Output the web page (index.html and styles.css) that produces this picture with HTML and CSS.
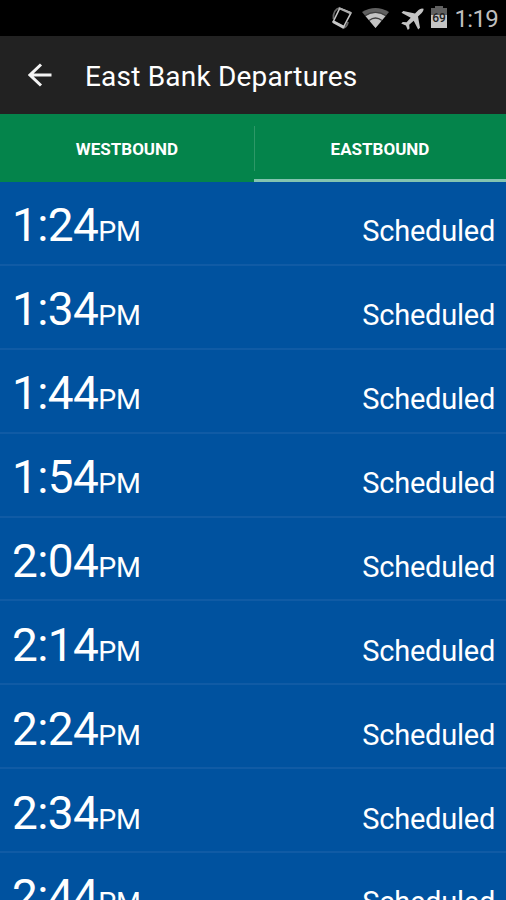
FILE: index.html
```html
<!DOCTYPE html>
<html lang="en">
<head>
<meta charset="utf-8">
<title>East Bank Departures</title>
<link rel="stylesheet" href="styles.css">
</head>
<body>
<div class="status">
  <svg class="ic-rotate" viewBox="0 0 22 24" width="22" height="24">
    <path d="M2.500 13Q1.500 4 9 1.500M17 16Q16 21 11.500 22.500" fill="none" stroke="#666" stroke-width="1.800"/>
    <path d="M8.800 2.200 20 6.800 12.500 21 2.300 15.500Z" fill="#000" stroke="#c4c4c4" stroke-width="1.600" stroke-linejoin="round"/>
    <path d="M2.800 16 12 20.800" stroke="#c8c8c8" stroke-width="3" stroke-linecap="round"/>
    <path d="M9.500 2.900 19 7" stroke="#aaa" stroke-width="2" stroke-linecap="round"/>
  </svg>
  <svg class="ic-wifi" viewBox="0 0 27 20" width="27" height="20">
    <path d="M0 4Q13.500-4 27 4L13.500 20Z" fill="#606060"/>
    <path d="M3.500 8Q13.500 1.500 23.500 8L13.500 20Z" fill="#c4c4c4"/>
    <path d="M3 7.700Q13.500 1 24 7.700M7 12.500Q13.500 7.500 20 12.500" fill="none" stroke="#404040" stroke-width="1.300"/>
  </svg>
  <svg class="ic-plane" viewBox="0 0 23 22" width="23" height="22">
    <path d="M22.500.7Q20-.3 17.500 2L14 5.400 2.300 3 .5 4.700 9.700 9.700 5.600 14.300 1.800 13.900.2 15.400 4.900 17.500 6.800 21.900 8.500 20.400 8.200 16.700 12.700 12.800 17.200 21.500 19 19.800 17 8.600 20.700 5Q23 2.500 22.500.7Z" fill="#c4c4c4"/>
  </svg>
  <div class="battery"><span>69</span></div>
  <span class="clock">1:19</span>
</div>
<header class="bar">
  <svg class="back" viewBox="0 0 24 24" width="24" height="24"><path d="M23.500 12H2.500M13 1.500 2 12 13 22.500" fill="none" stroke="#f4f4f4" stroke-width="3"/></svg>
  <h1>East Bank Departures</h1>
</header>
<nav class="tabs">
  <a class="tab west">WESTBOUND</a>
  <a class="tab east">EASTBOUND</a>
</nav>
<ul class="list">
  <li><span class="time">1:24<small>PM</small></span><span class="state">Scheduled</span></li>
  <li><span class="time">1:34<small>PM</small></span><span class="state">Scheduled</span></li>
  <li><span class="time">1:44<small>PM</small></span><span class="state">Scheduled</span></li>
  <li><span class="time">1:54<small>PM</small></span><span class="state">Scheduled</span></li>
  <li><span class="time">2:04<small>PM</small></span><span class="state">Scheduled</span></li>
  <li><span class="time">2:14<small>PM</small></span><span class="state">Scheduled</span></li>
  <li><span class="time">2:24<small>PM</small></span><span class="state">Scheduled</span></li>
  <li><span class="time">2:34<small>PM</small></span><span class="state">Scheduled</span></li>
  <li><span class="time">2:44<small>PM</small></span><span class="state">Scheduled</span></li>
</ul>
</body>
</html>
```
FILE: styles.css
```css
* { box-sizing: border-box; }
body {
  margin: 0;
  height: 900px;
  overflow: hidden;
  display: flex;
  flex-direction: column;
  background: #00529f;
  color: #fff;
  font-family: Roboto, sans-serif;
}
.status {
  flex: none;
  height: 36px;
  background: #000;
  display: flex;
  align-items: flex-start;
  justify-content: flex-end;
  padding: 0 8px 0 0;
}
.ic-rotate { margin: 6px 9px 0 0; }
.ic-wifi { margin: 8px 12px 0 0; }
.ic-plane { margin: 8px 7px 0 0; }
.battery {
  position: relative;
  width: 16px;
  height: 20px;
  margin: 8px 0 0;
  background: linear-gradient(#606060 0 7px, #c4c4c4 7px);
  color: #222;
  font-size: 12px;
  line-height: 13px;
  font-weight: 500;
  text-align: center;
}
.battery::before {
  content: "";
  position: absolute;
  left: 4px;
  top: -2px;
  width: 8px;
  height: 2px;
  background: #606060;
}
.battery span { display: block; padding-top: 4px; }
.clock {
  width: 51px;
  text-align: right;
  font-size: 24px;
  letter-spacing: -0.7px;
  line-height: 38px;
  color: #bebebe;
}
.bar {
  flex: none;
  height: 78px;
  background: #222;
  display: flex;
  align-items: center;
  padding-left: 28px;
}
.back { flex: none; }
h1 {
  margin: 4px 0 0 33px;
  font-size: 28px;
  font-weight: 400;
  letter-spacing: 0.2px;
  line-height: 34px;
  white-space: nowrap;
}
.tabs {
  flex: none;
  height: 68px;
  display: flex;
  background: #04844b;
}
.tab {
  display: flex;
  align-items: center;
  justify-content: center;
  font-size: 17px;
  font-weight: 700;
  padding-top: 2px;
}
.west {
  width: 254px;
}
.east {
  position: relative;
  width: 252px;
  border-bottom: 3px solid #83c4b0;
  padding-top: 5px;
}
.east::before {
  content: "";
  position: absolute;
  left: 0;
  top: 12px;
  width: 1px;
  height: 45px;
  background: #2d9867;
}
.list {
  margin: 0;
  padding: 0;
  list-style: none;
}
.list li {
  height: 83.9px;
  display: flex;
  align-items: baseline;
  justify-content: space-between;
  padding: 16.3px 11px 0 12px;
  border-bottom: 2px solid #105ba5;
}
.time {
  font-size: 46px;
  letter-spacing: -0.6px;
  line-height: 54px;
}
.time small { font-size: 28.500px; letter-spacing: -0.3px; }
.state { font-size: 29px; letter-spacing: -0.25px; }
```
